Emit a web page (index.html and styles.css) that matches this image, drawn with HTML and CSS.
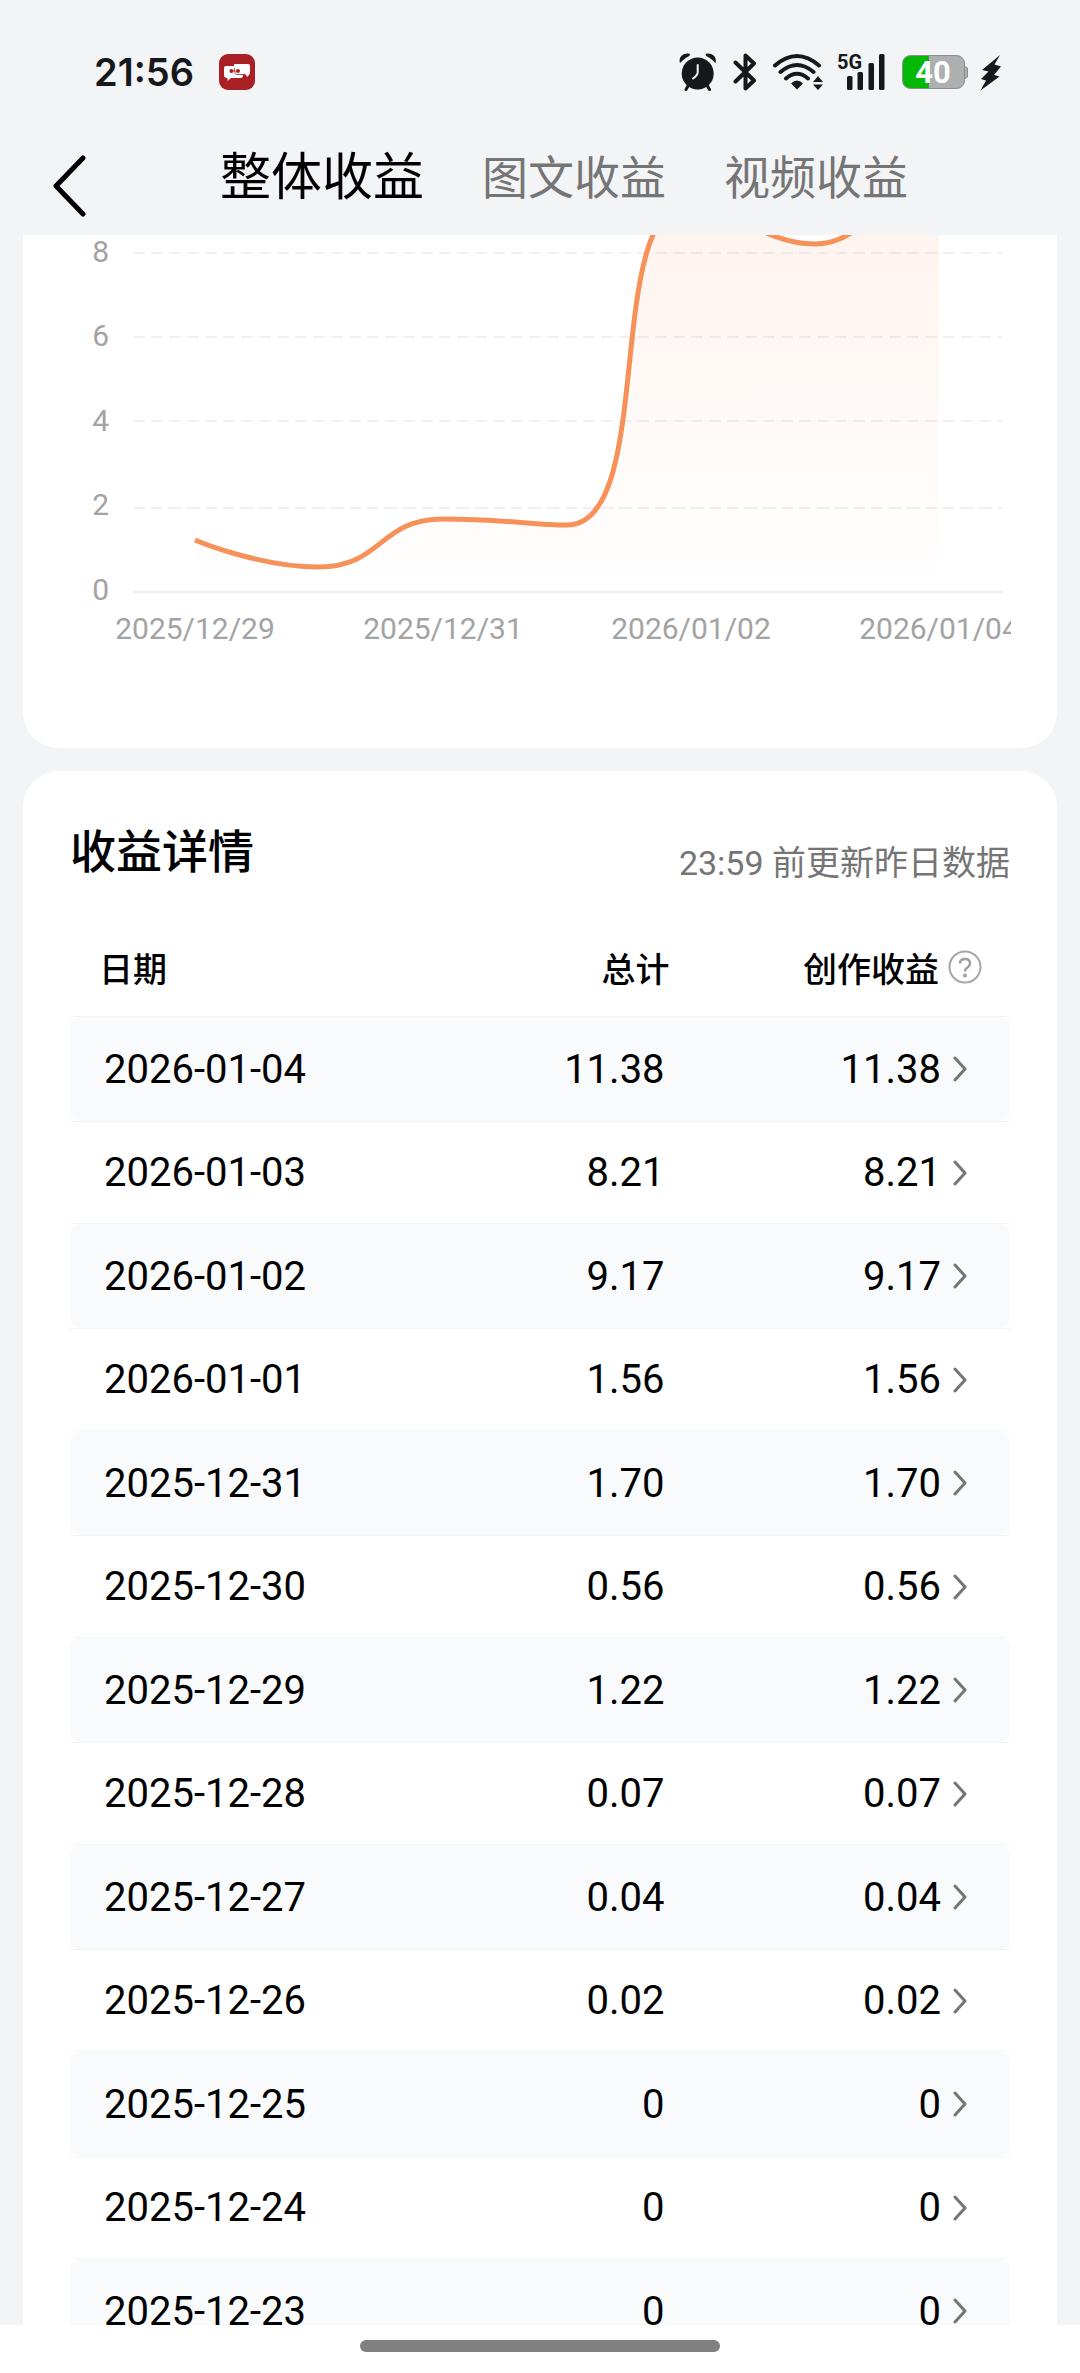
FILE: index.html
```html
<!DOCTYPE html>
<html lang="zh-CN">
<head>
    <meta charset="UTF-8">
    <meta name="viewport" content="width=device-width, initial-scale=1.0">
    <title>整体收益</title>
    <link rel="stylesheet" href="styles.css">
</head>
<body>
    <svg class="sprite" aria-hidden="true">
        <symbol id="chevron" viewBox="0 0 14 26">
            <path d="M2 2L12 13L2 24" fill="none" stroke="#757575" stroke-width="3" stroke-linecap="round" stroke-linejoin="round"/>
        </symbol>
    </svg>

    <header class="header">
        <div class="status-bar">
            <span class="clock">21:56</span>
            <svg class="app-icon" width="36" height="36" viewBox="0 0 36 36">
                <rect width="36" height="36" rx="9" fill="#a82023"/>
                <path d="M7 12H15V10.500Q15 10 16 10H29Q31 10 31 12V19L30 21L28 23L27 20.500H24Q24 24 22 24H12L8.500 27V24Q5 24 5 21V14Q5 12 7 12Z" fill="#fff"/>
                <circle cx="12.400" cy="17" r="2" fill="#a82023"/>
                <circle cx="19" cy="17" r="2" fill="#a82023"/>
                <path d="M12 17H19M15.500 14V17.500Q16 20.500 18 20.500H26" fill="none" stroke="#a82023" stroke-width="0.800"/>
            </svg>
            <div class="status-icons">
                <svg width="38" height="38" viewBox="0 0 38 38">
                    <g fill="#17181a">
                        <circle cx="18.700" cy="20.500" r="16"/>
                        <path d="M1 10C-1 4 5 -1 11 1Q11 3 7.500 4.500Q4.500 6.500 1 10Z"/>
                        <path d="M36.500 10C38.500 4 32.500 -1 26.500 1Q26.500 3 30 4.500Q33 6.500 36.500 10Z"/>
                    </g>
                    <path d="M9 33L7 36.500M28.500 33L30.500 36.500" stroke="#17181a" stroke-width="3" stroke-linecap="round"/>
                    <path d="M18.700 12V19.500Q18.700 22 14 25.500" fill="none" stroke="#f3f4f6" stroke-width="2" stroke-linecap="round"/>
                </svg>
                <svg class="bluetooth" width="24" height="38" viewBox="0 0 24 38">
                    <path d="M2.500 9.500L21 27.500L12.500 35.500V2.500L21 10.500L2.500 28.500" fill="none" stroke="#17181a" stroke-width="4" stroke-linecap="round" stroke-linejoin="round"/>
                </svg>
                <svg class="wifi" width="50" height="38" viewBox="0 0 50 38">
                    <path d="M2 12.500Q24 -6.500 46 12.500M7.500 19Q24 5 40.500 19M13 25.500Q24 16 35 25.500" fill="none" stroke="#17181a" stroke-width="4" stroke-linecap="round"/>
                    <path d="M18 30.500Q24 24.500 30 30.500L24 36.500ZM40 29L45 23L50 29ZM40 31.500H50L45 37Z" fill="#17181a"/>
                </svg>
                <svg class="signal" width="49" height="38" viewBox="0 0 49 38">
                    <g fill="#17181a">
                        <text class="network" x="0" y="16">5G</text>
                        <rect x="10" y="23" width="5.500" height="14" rx="1.500"/>
                        <rect x="20.500" y="19" width="5.500" height="18" rx="1.500"/>
                        <rect x="31.500" y="10" width="5.500" height="27" rx="1.500"/>
                        <rect x="42" y="1" width="5.500" height="36" rx="1.500"/>
                    </g>
                </svg>
                <svg class="battery" width="66" height="36" viewBox="0 0 66 36">
                    <path d="M62 12H63Q63 13 65.500 14V23Q63 24 63 25H62Z" fill="#aeafb1" stroke="#8b8c8e"/>
                    <rect x="0.500" y="1.500" width="62" height="33" rx="8" fill="#aeafb1" stroke="#8b8c8e"/>
                    <path d="M27 2V34H9Q1 34 1 26V10Q1 2 9 2Z" fill="#05b805"/>
                    <text class="battery-level" x="31" y="29" text-anchor="middle">40</text>
                </svg>
                <svg class="bolt" width="22" height="38" viewBox="0 0 22 38">
                    <path d="M20 2L2 17L8.500 18.500L1 26L6 27.500L0.500 37.500L19.500 23.500L14 22L21 13.500L14.500 11.500Z" fill="#17181a"/>
                </svg>
            </div>
        </div>

        <div class="nav-bar">
            <button class="back" type="button" aria-label="返回">
                <svg width="34" height="64" viewBox="0 0 34 64">
                    <path d="M31 4L4 32L31 60" fill="none" stroke="#000" stroke-width="5" stroke-linecap="round" stroke-linejoin="round"/>
                </svg>
            </button>
            <nav class="tabs">
                <a class="tab active" href="#all">整体收益</a>
                <a class="tab" href="#article">图文收益</a>
                <a class="tab" href="#video">视频收益</a>
            </nav>
        </div>
    </header>

    <main class="content">
        <section class="card chart-card">
            <svg class="chart" viewBox="0 0 942 425" role="img" aria-label="收益趋势">
                <defs>
                    <linearGradient id="area" gradientUnits="userSpaceOnUse" x1="0" y1="-125" x2="0" y2="357">
                        <stop offset="0" stop-color="#f98f57" stop-opacity="0.130"/>
                        <stop offset="1" stop-color="#f98f57" stop-opacity="0"/>
                    </linearGradient>
                </defs>
                <g class="grid-lines">
                    <path d="M64 18H933M64 102H933M64 186H933M64 273H933"/>
                </g>
                <path class="axis-line" d="M64 357H934"/>
                <path fill="url(#area)" d="M126 305C126 305 189 332 250 332C313 332 310 284 374 284C434 284 465 290 498 290C589 290 532 -32 622 -32C656 -32 694 9 746 9C818 9 870 -125 870 -125V357H126Z"/>
                <path class="line" d="M126 305C126 305 189 332 250 332C313 332 310 284 374 284C434 284 465 290 498 290C589 290 532 -32 622 -32C656 -32 694 9 746 9C818 9 870 -125 870 -125"/>
                <g class="axis-text" text-anchor="end">
                    <text x="40" y="27">8</text>
                    <text x="40" y="111">6</text>
                    <text x="40" y="196">4</text>
                    <text x="40" y="280">2</text>
                    <text x="40" y="365">0</text>
                </g>
                <g class="axis-text" text-anchor="middle">
                    <text x="126" y="404">2025/12/29</text>
                    <text x="374" y="404">2025/12/31</text>
                    <text x="622" y="404">2026/01/02</text>
                    <text x="870" y="404">2026/01/04</text>
                </g>
            </svg>
        </section>

        <section class="card detail-card">
            <div class="detail-head">
                <h2>收益详情</h2>
                <p>23:59 前更新昨日数据</p>
            </div>
            <table class="detail-table">
                <thead>
                    <tr>
                        <th class="date" scope="col">日期</th>
                        <th class="total" scope="col">总计</th>
                        <th class="income" scope="col">
                            <div class="income-head">
                                创作收益
                                <button class="help" type="button" aria-label="说明">
                                    <svg width="34" height="34" viewBox="0 0 34 34">
                                        <circle cx="17" cy="17" r="15.500" fill="none" stroke="#a6a6a6" stroke-width="2"/>
                                        <path d="M12 13.500Q12 9 17 9Q22 9 22 13.500Q22 15.500 19.500 17.500Q17 19 17 21.500" fill="none" stroke="#a0a0a0" stroke-width="2.500"/>
                                        <circle cx="17" cy="25.500" r="2" fill="#a0a0a0"/>
                                    </svg>
                                </button>
                            </div>
                        </th>
                    </tr>
                </thead>
                <tbody>
                    <tr><td>2026-01-04</td><td>11.38</td><td><a href="#2026-01-04">11.38<svg class="chevron"><use href="#chevron"/></svg></a></td></tr>
                    <tr><td>2026-01-03</td><td>8.21</td><td><a href="#2026-01-03">8.21<svg class="chevron"><use href="#chevron"/></svg></a></td></tr>
                    <tr><td>2026-01-02</td><td>9.17</td><td><a href="#2026-01-02">9.17<svg class="chevron"><use href="#chevron"/></svg></a></td></tr>
                    <tr><td>2026-01-01</td><td>1.56</td><td><a href="#2026-01-01">1.56<svg class="chevron"><use href="#chevron"/></svg></a></td></tr>
                    <tr><td>2025-12-31</td><td>1.70</td><td><a href="#2025-12-31">1.70<svg class="chevron"><use href="#chevron"/></svg></a></td></tr>
                    <tr><td>2025-12-30</td><td>0.56</td><td><a href="#2025-12-30">0.56<svg class="chevron"><use href="#chevron"/></svg></a></td></tr>
                    <tr><td>2025-12-29</td><td>1.22</td><td><a href="#2025-12-29">1.22<svg class="chevron"><use href="#chevron"/></svg></a></td></tr>
                    <tr><td>2025-12-28</td><td>0.07</td><td><a href="#2025-12-28">0.07<svg class="chevron"><use href="#chevron"/></svg></a></td></tr>
                    <tr><td>2025-12-27</td><td>0.04</td><td><a href="#2025-12-27">0.04<svg class="chevron"><use href="#chevron"/></svg></a></td></tr>
                    <tr><td>2025-12-26</td><td>0.02</td><td><a href="#2025-12-26">0.02<svg class="chevron"><use href="#chevron"/></svg></a></td></tr>
                    <tr><td>2025-12-25</td><td>0</td><td><a href="#2025-12-25">0<svg class="chevron"><use href="#chevron"/></svg></a></td></tr>
                    <tr><td>2025-12-24</td><td>0</td><td><a href="#2025-12-24">0<svg class="chevron"><use href="#chevron"/></svg></a></td></tr>
                    <tr><td>2025-12-23</td><td>0</td><td><a href="#2025-12-23">0<svg class="chevron"><use href="#chevron"/></svg></a></td></tr>
                </tbody>
            </table>
        </section>
    </main>

    <footer class="gesture-bar">
        <div class="indicator"></div>
    </footer>
</body>
</html>
```
FILE: styles.css
```css
* {
    box-sizing: border-box;
}
body {
    margin: 0;
    height: 100vh;
    display: flex;
    flex-direction: column;
    overflow: hidden;
    background-color: #f3f4f6;
    color: #000;
    font-family: Roboto, "Noto Sans CJK SC", sans-serif;
}
a {
    color: inherit;
    text-decoration: none;
}
button {
    padding: 0;
    border: none;
    background: none;
    cursor: pointer;
}
svg {
    display: block;
    flex: none;
}
.sprite {
    position: absolute;
    width: 0;
    height: 0;
}

/* status bar */
.status-bar {
    display: flex;
    align-items: center;
    height: 48px;
    margin-top: 48px;
    padding: 0 78px 0 94px;
}
.clock {
    font-family: Inter, sans-serif;
    font-size: 38px;
    font-weight: 600;
    line-height: 48px;
    color: #17181a;
}
.app-icon {
    margin-left: 25px;
}
.status-icons {
    display: flex;
    align-items: center;
    margin-left: auto;
}
.bluetooth {
    margin-left: 16px;
}
.wifi {
    margin-left: 16px;
}
.signal {
    margin-left: 14px;
    overflow: visible;
}
.network {
    font-size: 20px;
    font-weight: 700;
}
.battery {
    margin-left: 16px;
}
.battery-level {
    font-size: 31px;
    font-weight: 700;
    fill: #fff;
}
.bolt {
    margin-left: 12px;
}

/* tabs */
.nav-bar {
    display: flex;
    align-items: center;
    height: 118px;
    margin-top: 21px;
    padding: 0 52px;
}
.back {
    margin-top: 20px;
}
.tabs {
    display: flex;
    align-items: center;
    gap: 58px;
    margin-top: 4px;
    margin-left: 134px;
}
.tab {
    font-size: 46px;
    line-height: 72px;
    color: #757575;
    white-space: nowrap;
}
.tab.active {
    font-size: 51px;
    color: #000;
}

/* cards */
.content {
    flex: 1;
    min-height: 0;
    overflow: hidden;
    padding: 0 23px;
}
.card {
    background-color: #fff;
    border-radius: 36px;
    padding: 0 47px;
}
.chart-card {
    border-radius: 0 0 36px 36px;
    padding: 0 46px 88px;
    margin-bottom: 23px;
}
.chart {
    width: 100%;
}
.grid-lines {
    fill: none;
    stroke: #f0f0f1;
    stroke-width: 2;
    stroke-dasharray: 12 6;
}
.axis-line {
    stroke: #f3f4f6;
    stroke-width: 3;
}
.axis-text {
    font-size: 30px;
    fill: #a3a3a3;
}
.line {
    fill: none;
    stroke: #f7915a;
    stroke-width: 5;
}

/* details */
.detail-card {
    padding-top: 48px;
}
.detail-head {
    display: flex;
    justify-content: space-between;
    align-items: flex-end;
    margin-bottom: 36px;
}
.detail-head h2 {
    margin: 0;
    font-size: 46px;
    font-weight: 500;
    line-height: 66px;
}
.detail-head p {
    margin: 0;
    font-size: 34px;
    line-height: 44px;
    color: #757575;
}
.detail-table {
    width: 100%;
    table-layout: fixed;
    border-collapse: separate;
    border-spacing: 0;
    text-align: right;
}
.detail-table th {
    height: 96px;
    padding: 0 2px 4px 0;
    font-size: 34px;
    font-weight: 500;
}
.detail-table th.date {
    width: 40%;
    padding-left: 29px;
    text-align: left;
}
.detail-table th.total {
    width: 24%;
}
.detail-table th.income {
    width: 36%;
    padding-right: 28px;
}
.income-head {
    display: flex;
    justify-content: flex-end;
    align-items: center;
    gap: 9px;
}
.detail-table td {
    height: 103px;
    padding: 0 7px 0 0;
    font-size: 40px;
}
.detail-table td:first-child {
    padding-left: 34px;
    text-align: left;
}
.detail-table td:last-child {
    padding-right: 43px;
}
.detail-table td a {
    display: flex;
    justify-content: flex-end;
    align-items: center;
    gap: 12px;
}
.detail-table tbody tr:nth-child(odd) {
    box-shadow: 0 1px #f2f4f6, 0 -1px #f5f6f8;
}
.detail-table tbody tr:nth-child(odd) td {
    height: 104px;
    background-color: #f9fafc;
}
.detail-table tbody tr:nth-child(odd) td:first-child {
    border-radius: 10px 0 0 10px;
}
.detail-table tbody tr:nth-child(odd) td:last-child {
    border-radius: 0 10px 10px 0;
}
.chevron {
    width: 14px;
    height: 26px;
}

/* gesture bar */
.gesture-bar {
    display: flex;
    justify-content: center;
    align-items: center;
    height: 48px;
    padding-bottom: 6px;
    background-color: #fff;
}
.indicator {
    width: calc(100% / 3);
    height: 12px;
    border-radius: 6px;
    background-color: #808080;
}
```
